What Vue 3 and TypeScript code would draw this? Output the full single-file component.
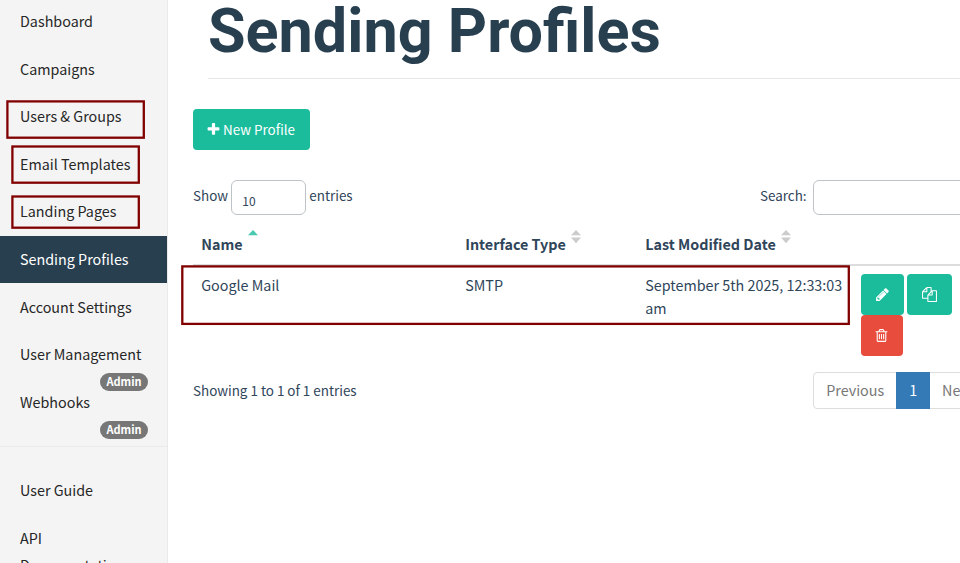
<script setup lang="ts">
interface NavItem {
  label: string
  admin?: boolean
  active?: boolean
}

interface Profile {
  name: string
  type: string
  modified: string
}

const nav: NavItem[] = [
  { label: 'Dashboard' },
  { label: 'Campaigns' },
  { label: 'Users & Groups' },
  { label: 'Email Templates' },
  { label: 'Landing Pages' },
  { label: 'Sending Profiles', active: true },
  { label: 'Account Settings' },
  { label: 'User Management', admin: true },
  { label: 'Webhooks', admin: true },
]

const docs: string[] = ['User Guide', 'API Documentation']

const profiles: Profile[] = [
  { name: 'Google Mail', type: 'SMTP', modified: 'September 5th 2025, 12:33:03 am' },
]

const icons = {
  plus: 'M1600 736v192q0 40-28 68t-68 28h-416v416q0 40-28 68t-68 28h-192q-40 0-68-28t-28-68v-416h-416q-40 0-68-28t-28-68v-192q0-40 28-68t68-28h416v-416q0-40 28-68t68-28h192q40 0 68 28t28 68v416h416q40 0 68 28t28 68z',
  pencil: 'M491 1536l91-91-235-235-91 91v107h128v128h107zm523-928q0-22-22-22-10 0-17 7l-542 542q-7 7-7 17 0 22 22 22 10 0 17-7l542-542q7-7 7-17zm-54-192l416 416-832 832h-416v-416zm683 96q0 53-37 90l-166 166-416-416 166-165q36-38 90-38 53 0 91 38l235 234q37 39 37 91z',
  copy: 'M1696 384q40 0 68 28t28 68v1216q0 40-28 68t-68 28h-960q-40 0-68-28t-28-68v-288h-544q-40 0-68-28t-28-68v-672q0-40 20-88t48-76l408-408q28-28 76-48t88-20h416q40 0 68 28t28 68v328q68-40 128-40h416zm-544 213l-299 299h299v-299zm-640-384l-299 299h299v-299zm196 647l316-316v-416h-384v416q0 40-28 68t-68 28h-416v640h512v-256q0-40 20-88t48-76zm956 804v-1152h-384v416q0 40-28 68t-68 28h-416v640h896z',
  trash: 'M704 736v576q0 14-9 23t-23 9h-64q-14 0-23-9t-9-23v-576q0-14 9-23t23-9h64q14 0 23 9t9 23zm256 0v576q0 14-9 23t-23 9h-64q-14 0-23-9t-9-23v-576q0-14 9-23t23-9h64q14 0 23 9t9 23zm256 0v576q0 14-9 23t-23 9h-64q-14 0-23-9t-9-23v-576q0-14 9-23t23-9h64q14 0 23 9t9 23zm128 724v-948h-896v948q0 22 7 40.5t14.5 27 10.5 8.5h832q3 0 10.5-8.5t14.5-27 7-40.5zm-672-1076h448l-48-117q-7-9-17-11h-317q-10 2-17 11zm928 32v64q0 14-9 23t-23 9h-96v948q0 83-47 143.5t-113 60.5h-832q-66 0-113-58.5t-47-141.5v-952h-96q-14 0-23-9t-9-23v-64q0-14 9-23t23-9h309l70-167q15-37 54-63t79-26h320q40 0 79 26t54 63l70 167h309q14 0 23 9t9 23z',
}
</script>

<template>
  <div class="page">
    <aside class="sidebar">
      <ul class="nav">
        <li v-for="item in nav" :key="item.label" class="nav-item" :class="{ active: item.active }">
          <span>{{ item.label }}</span>
          <span v-if="item.admin" class="badge">Admin</span>
        </li>
      </ul>
      <ul class="nav docs">
        <li v-for="label in docs" :key="label" class="nav-item doc">{{ label }}</li>
      </ul>
    </aside>

    <main class="main">
      <h1 class="title">Sending Profiles</h1>
      <button class="btn new" type="button">
        <svg class="icon" viewBox="0 0 1792 1792"><path :d="icons.plus" /></svg>
        <span>New Profile</span>
      </button>

      <div class="controls">
        <div class="length">
          <span>Show</span>
          <div class="field select">10</div>
          <span>entries</span>
        </div>
        <label class="search">
          <span>Search:</span>
          <input class="field" type="text" />
        </label>
      </div>

      <div class="grid head">
        <div class="cell">
          Name
          <svg class="sort" viewBox="0 0 10 14"><path class="on" d="M0 5.2 5 0l5 5.2z" /></svg>
        </div>
        <div class="cell">
          Interface Type
          <svg class="sort" viewBox="0 0 10 14"><path d="M0 5.2 5 0l5 5.2zM0 7.6h10L5 13.2z" /></svg>
        </div>
        <div class="cell">
          Last Modified Date
          <svg class="sort" viewBox="0 0 10 14"><path d="M0 5.2 5 0l5 5.2zM0 7.6h10L5 13.2z" /></svg>
        </div>
        <div class="cell"></div>
      </div>
      <div v-for="row in profiles" :key="row.name" class="grid row">
        <div class="cell">{{ row.name }}</div>
        <div class="cell">{{ row.type }}</div>
        <div class="cell">{{ row.modified }}</div>
        <div class="actions">
          <button class="btn edit" type="button"><svg class="icon" viewBox="0 0 1792 1792"><path :d="icons.pencil" /></svg></button>
          <button class="btn copy" type="button"><svg class="icon" viewBox="0 0 1792 1792"><path :d="icons.copy" /></svg></button>
          <button class="btn danger" type="button"><svg class="icon" viewBox="0 0 1792 1792"><path :d="icons.trash" /></svg></button>
        </div>
      </div>

      <div class="footer">
        <span class="info">Showing 1 to 1 of 1 entries</span>
        <div class="pages">
          <span class="pg">Previous</span>
          <span class="pg current">1</span>
          <span class="pg">Next</span>
        </div>
      </div>
    </main>

    <svg class="marks" width="960" height="563" viewBox="0 0 960 563">
      <rect x="7.4" y="101.4" width="136.4" height="36.3" />
      <rect x="12.4" y="146.5" width="126.4" height="36.2" />
      <rect x="12.4" y="196.5" width="126.4" height="31.2" />
      <rect x="182.3" y="266.4" width="666.5" height="57.5" />
    </svg>
  </div>
</template>

<style>
body {
  margin: 0;
  overflow: hidden;
}
</style>

<style scoped>
.page {
  position: relative;
  display: flex;
  width: 960px;
  height: 563px;
  overflow: hidden;
  background: #fff;
  color: #2f455a;
  font: 14.33px/23px "Noto Sans CJK SC", "Noto Sans", sans-serif;
}
.sidebar {
  flex: none;
  box-sizing: border-box;
  width: 168px;
  background: #f4f4f4;
  border-right: 1px solid #eaeaea;
  color: #262626;
}
.nav {
  margin: 0;
  padding: 0;
  list-style: none;
}
.nav:first-child {
  margin-top: -2.3px;
  padding-bottom: 19.9px;
  border-bottom: 1px solid #eaeaea;
}
.docs {
  padding-top: 19.6px;
}
.nav-item {
  display: flex;
  flex-direction: column;
  box-sizing: border-box;
  height: 47.6px;
  padding: 9.3px 19px 0 20px;
  line-height: 27.6px;
  white-space: nowrap;
}
.nav-item.doc {
  display: block;
  width: 130px;
  height: auto;
  padding: 9px 0 11.5px 20px;
  white-space: normal;
}
.nav-item.active {
  background: #283f50;
  color: #fff;
}
.badge {
  align-self: flex-end;
  flex: none;
  box-sizing: border-box;
  width: 48px;
  height: 18px;
  margin-top: 5.3px;
  border-radius: 9px;
  background: #777;
  color: #fff;
  font-size: 11px;
  font-weight: 700;
  line-height: 17px;
  text-align: center;
}
.main {
  flex: none;
  width: 880px;
  padding-left: 25px;
}
.title {
  box-sizing: border-box;
  height: 79px;
  margin: 0 0 30px 15px;
  padding-top: 1px;
  border-bottom: 1px solid #e7e7e7;
  color: #283f50;
  font: 700 61.1px/60px Roboto, sans-serif;
}
.btn {
  display: flex;
  align-items: center;
  justify-content: center;
  box-sizing: border-box;
  height: 41px;
  padding: 0;
  border: 0;
  border-radius: 4px;
  background: #1abc9c;
  color: #fff;
  font: inherit;
}
.icon {
  flex: none;
  width: 15px;
  height: 15px;
  fill: currentColor;
}
.new {
  width: 117px;
  gap: 2px;
  padding-right: 2px;
  font-size: 13.43px;
}
.new span {
  margin-top: -1px;
}
.controls {
  display: flex;
  height: 35px;
  margin-top: 30px;
  font-size: 13.43px;
}
.length,
.search {
  display: flex;
  line-height: 31px;
}
.length {
  width: 567px;
}
.field {
  box-sizing: border-box;
  height: 35px;
  padding: 0;
  border: 1px solid #bdc3c7;
  border-radius: 6px;
  background: #fff;
}
.select {
  width: 75px;
  margin: 0 3.3px 0 3px;
  padding: 4px 0 0 10.3px;
  font-size: 12px;
  line-height: 31px;
}
.search .field {
  width: 200px;
  margin-left: 6.2px;
}
.grid {
  display: grid;
  grid-template-columns: 264px 180px 216px 160px;
}
.head {
  box-sizing: border-box;
  height: 51px;
  border-bottom: 2px solid #ddd;
  font-weight: 700;
}
.head .cell {
  display: flex;
  gap: 5.5px;
  padding: 17px 0 0 8.2px;
}
.sort {
  flex: none;
  width: 10px;
  height: 14px;
  margin-top: -2.3px;
  fill: #ccc;
}
.sort .on {
  fill: #48c9b0;
}
.row {
  height: 106px;
}
.row .cell {
  padding: 7px 7.5px 0 8.2px;
}
.actions {
  display: flex;
  flex-wrap: wrap;
  align-content: flex-start;
  column-gap: 3px;
  width: 100px;
  padding: 8px 0 0 8px;
}
.edit {
  width: 43px;
}
.copy {
  width: 45px;
}
.danger {
  width: 42px;
  padding-right: 1px;
  background: #e74c3c;
}
.footer {
  display: flex;
}
.info {
  width: 620px;
  font-size: 13.43px;
  line-height: 37px;
}
.pages {
  display: flex;
  box-sizing: border-box;
  height: 37px;
  border: 1px solid #ddd;
  border-radius: 4px;
  color: #777;
  line-height: 33px;
}
.pg {
  padding: 0 12.2px;
}
.pg.current {
  margin: -1px 0;
  padding: 0 12.8px;
  background: #337ab7;
  color: #fff;
  line-height: 35px;
}
.marks {
  position: absolute;
  left: 0;
  top: 0;
  fill: none;
  stroke: #800000;
  stroke-width: 2.3;
}
</style>
